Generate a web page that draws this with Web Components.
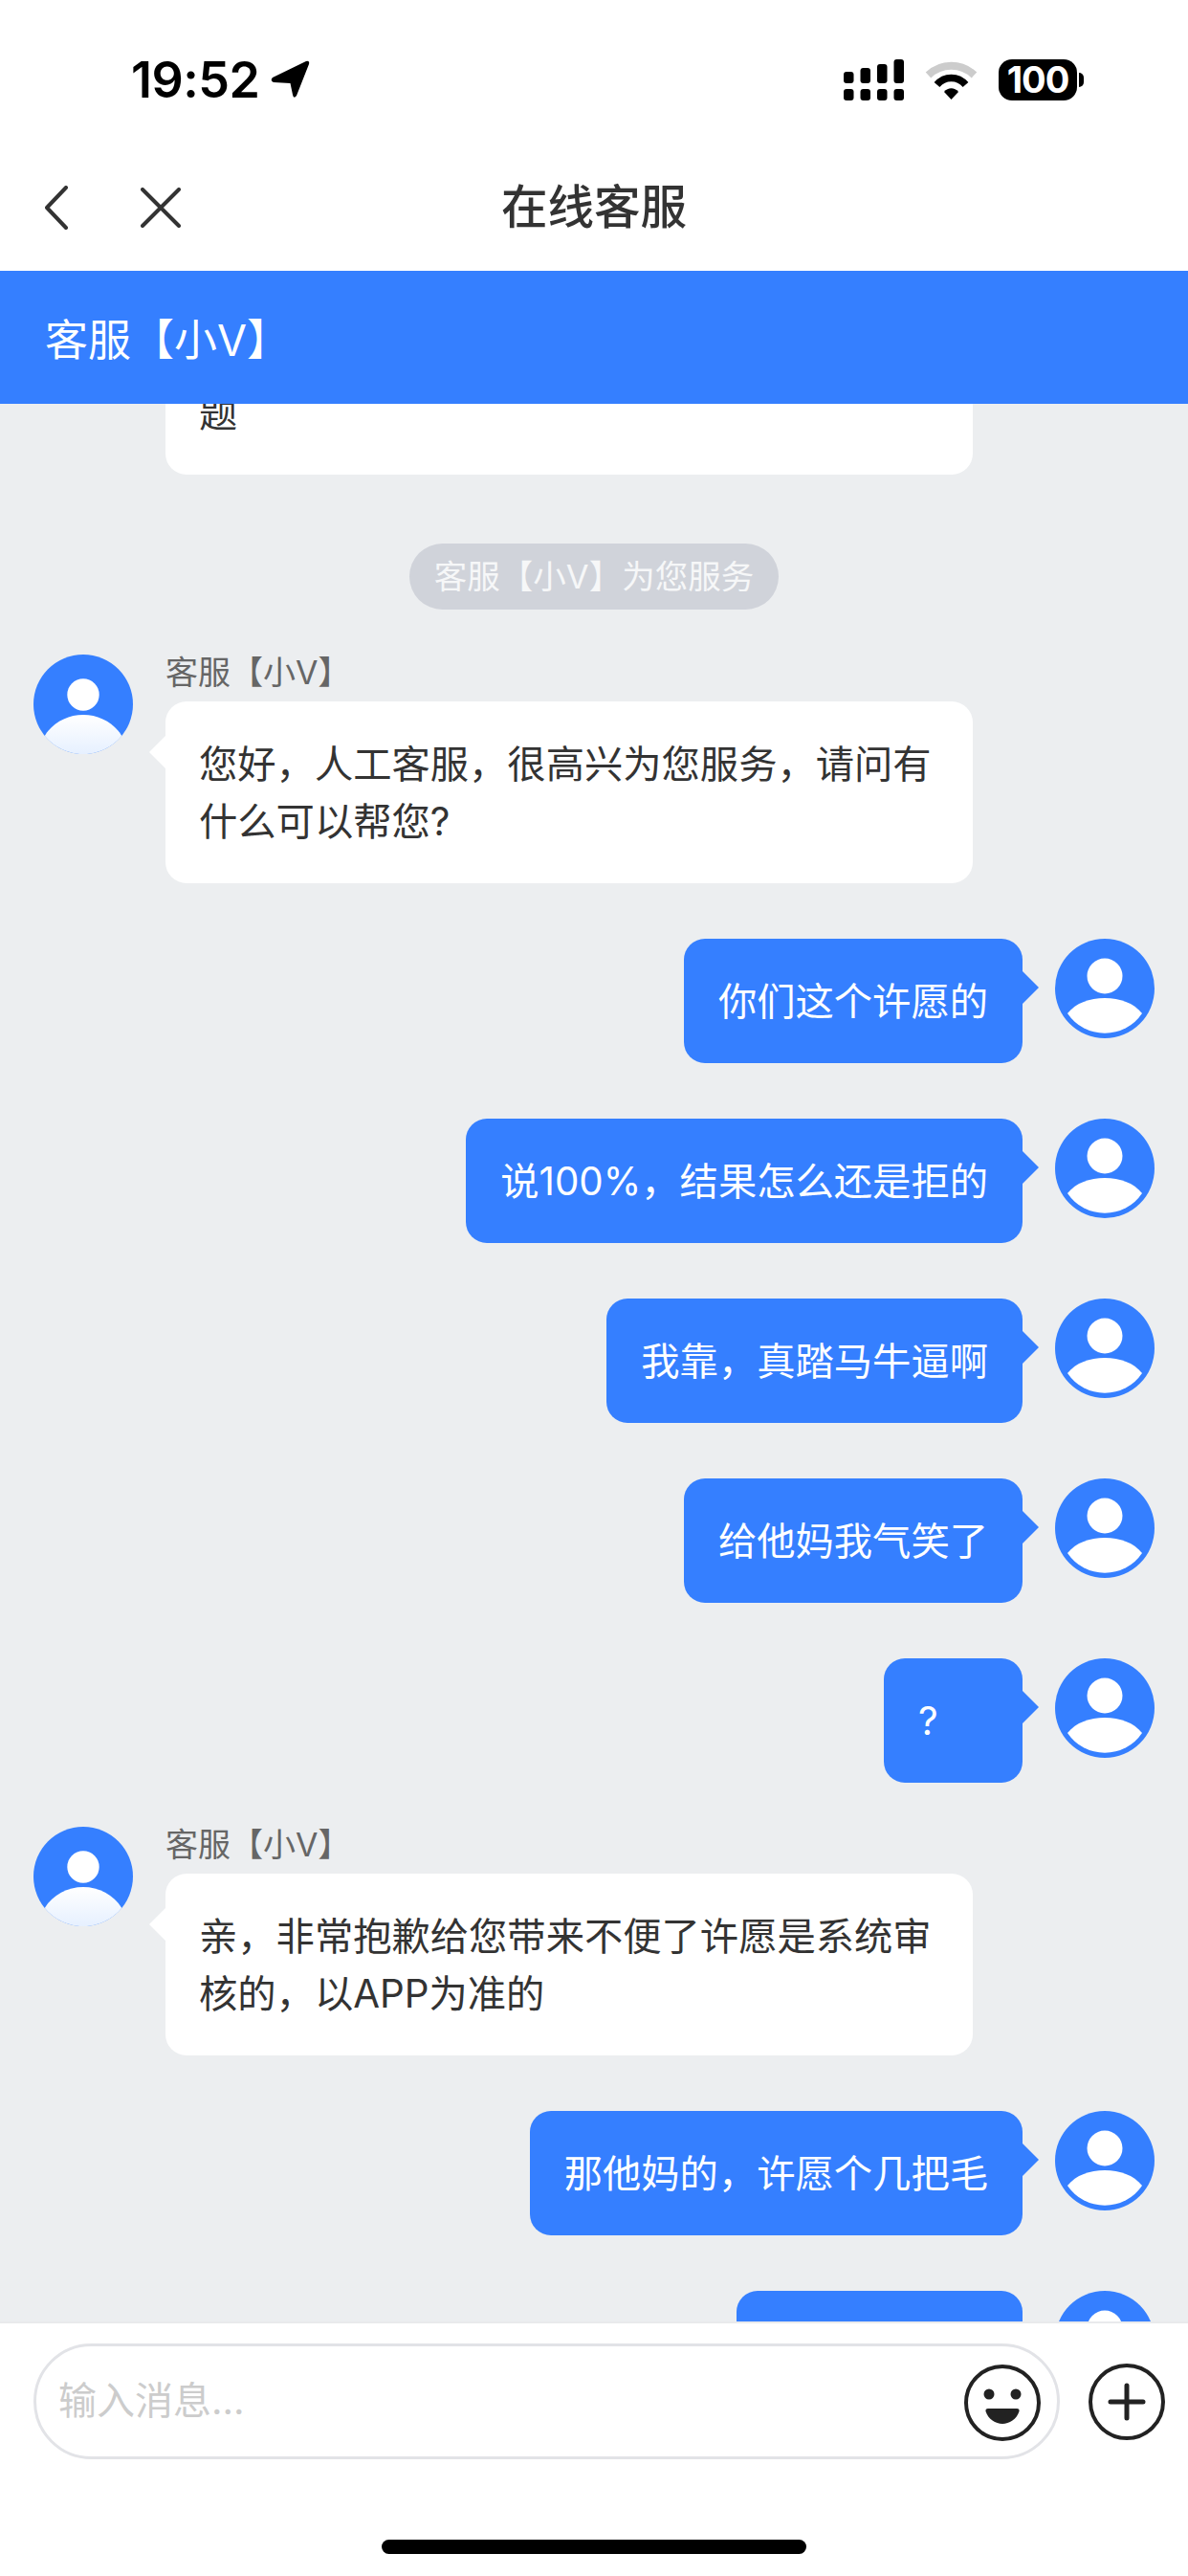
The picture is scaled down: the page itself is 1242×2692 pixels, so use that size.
<!DOCTYPE html>
<html lang="zh-CN">
<head>
<meta charset="utf-8">
<title>在线客服</title>
<style>
  html, body { margin: 0; padding: 0; }
  body {
    width: 1242px;
    height: 2692px;
    overflow: hidden;
    display: flex;
    flex-direction: column;
    background: #fff;
    color: #333;
    font-family: "Inter", "Noto Sans CJK SC", sans-serif;
  }
</style>
</head>
<body>
  <status-bar time="19:52"></status-bar>
  <nav-bar>在线客服</nav-bar>
  <agent-bar>客服【小V】</agent-bar>

  <chat-list>
    <chat-msg side="bot" clipped>题</chat-msg>
    <chat-notice>客服【小V】为您服务</chat-notice>
    <chat-msg side="bot" name="客服【小V】">您好，人工客服，很高兴为您服务，请问有什么可以帮您?</chat-msg>
    <chat-msg side="me">你们这个许愿的</chat-msg>
    <chat-msg side="me">说100%，结果怎么还是拒的</chat-msg>
    <chat-msg side="me">我靠，真踏马牛逼啊</chat-msg>
    <chat-msg side="me">给他妈我气笑了</chat-msg>
    <chat-msg side="me" style="--bubble-min:73px">?</chat-msg>
    <chat-msg side="bot" name="客服【小V】">亲，非常抱歉给您带来不便了许愿是系统审核的，以APP为准的</chat-msg>
    <chat-msg side="me">那他妈的，许愿个几把毛</chat-msg>
    <chat-msg side="me" style="--bubble-min:227px">&nbsp;</chat-msg>
  </chat-list>

  <chat-footer placeholder="输入消息..."></chat-footer>

<script>
;(function(){

  customElements.define('status-bar', class extends HTMLElement {
    constructor() {
      super();
      this.attachShadow({ mode: 'open' });
      this.shadowRoot.innerHTML = /*html*/`
        <style>
          :host {
            display: flex;
            flex: none;
            height: 167px;
            box-sizing: border-box;
            padding: 0 109px 0 137px;
            align-items: center;
            justify-content: space-between;
            color: #000;
          }
          .left, .right { display: flex; align-items: center; }
          .left { gap: 12px; }
          .right { gap: 22px; }
          .time {
            font: 600 52px/1 "Inter", sans-serif;
            letter-spacing: -0.5px;
          }
          svg { display: block; }
          .batt { display: flex; align-items: center; gap: 2px; }
          .batt b {
            width: 82px;
            height: 43px;
            border-radius: 14px;
            background: #000;
            color: #fff;
            font: 700 38px/43px "Inter", sans-serif;
            letter-spacing: -1px;
            text-align: center;
          }
          .batt i {
            width: 5px;
            height: 15px;
            background: #000;
            border-radius: 0 8px 8px 0;
          }
        </style>
        <div class="left">
          <span class="time"></span>
          <svg width="41" height="41" viewBox="0 0 41 41"><path d="M37 1Q41 0 40 4L27 37Q24 41 23 36L20.500 24L3 23Q-1 21 2 18Z"/></svg>
        </div>
        <div class="right">
          <svg width="63" height="43" viewBox="0 0 63 43">
            <rect x="0" y="31" width="10.500" height="12" rx="3"/>
            <rect x="17.500" y="31" width="10.500" height="12" rx="3"/>
            <rect x="35" y="31" width="10.500" height="12" rx="3"/>
            <rect x="52.500" y="31" width="10.500" height="12" rx="3"/>
            <rect x="0" y="13" width="10.500" height="12" rx="3"/>
            <rect x="17.500" y="9" width="10.500" height="16" rx="3"/>
            <rect x="35" y="5" width="10.500" height="20" rx="3"/>
            <rect x="52.500" y="0" width="10.500" height="25" rx="3"/>
          </svg>
          <svg width="55" height="40" viewBox="0 0 55 40">
            <path d="M3.500 14.500C17 1.500 38 1.500 51.500 14.500" fill="none" stroke="#ccc" stroke-width="8"/>
            <path d="M12.500 24.500C20.500 15 34.500 15 42.500 24.500" fill="none" stroke="#000" stroke-width="7.500"/>
            <path d="M20 32C24 27 31 27 35 32L27.500 40Z"/>
          </svg>
          <div class="batt"><b>100</b><i></i></div>
        </div>
      `;
      this.shadowRoot.querySelector('.time').textContent = this.getAttribute('time');
    }
  });

  customElements.define('nav-bar', class extends HTMLElement {
    constructor() {
      super();
      this.attachShadow({ mode: 'open' });
      this.shadowRoot.innerHTML = /*html*/`
        <style>
          :host {
            display: grid;
            flex: none;
            grid-template-columns: 1fr auto 1fr;
            align-items: center;
            height: 116px;
            box-sizing: border-box;
            padding-bottom: 16px;
            background: #fff;
          }
          .btns { display: flex; align-items: center; gap: 76px; padding-left: 47px; }
          .title { font-size: 48.500px; font-weight: 500; line-height: 60px; color: #333; }
          svg { display: block; }
        </style>
        <div class="btns">
          <svg width="24" height="46" viewBox="0 0 24 46" fill="none" stroke="#333" stroke-width="4" stroke-linecap="round" stroke-linejoin="round"><path d="M22 2L2 23L22 44"/></svg>
          <svg width="42" height="42" viewBox="0 0 42 42" fill="none" stroke="#333" stroke-width="4" stroke-linecap="round"><path d="M2 2L40 40M40 2L2 40"/></svg>
        </div>
        <div class="title"><slot></slot></div>
        <div></div>
      `;
    }
  });

  customElements.define('agent-bar', class extends HTMLElement {
    constructor() {
      super();
      this.attachShadow({ mode: 'open' });
      this.shadowRoot.innerHTML = /*html*/`
        <style>
          :host {
            display: flex;
            flex: none;
            align-items: center;
            height: 139px;
            padding-left: 47px;
            background: #357fff;
            color: #fff;
            font-size: 45px;
          }
        </style>
        <slot></slot>
      `;
    }
  });

  customElements.define('chat-list', class extends HTMLElement {
    constructor() {
      super();
      this.attachShadow({ mode: 'open' });
      this.shadowRoot.innerHTML = /*html*/`
        <style>
          :host {
            display: flex;
            flex: 1;
            min-height: 0;
            flex-direction: column;
            gap: 58px;
            overflow: hidden;
            background: #eceef0;
          }
        </style>
        <slot></slot>
      `;
    }
  });

  customElements.define('chat-notice', class extends HTMLElement {
    constructor() {
      super();
      this.attachShadow({ mode: 'open' });
      this.shadowRoot.innerHTML = /*html*/`
        <style>
          :host { display: flex; flex: none; justify-content: center; margin-bottom: 1px; }
          span {
            height: 69px;
            padding: 0 26px;
            border-radius: 35px;
            background: #d0d3da;
            color: #f6f7f8;
            font-size: 34.500px;
            line-height: 69px;
          }
        </style>
        <span><slot></slot></span>
      `;
    }
  });

  const avatars = {
    bot: `
      <defs><linearGradient id="g" x1="0" y1="0" x2="0" y2="1">
        <stop offset="0" stop-color="#fff"/><stop offset="1" stop-color="#e6f0ff"/>
      </linearGradient></defs>
      <circle cx="52" cy="52" r="52" fill="#357fff"/>
      <circle cx="52" cy="42" r="16.700" fill="#fff"/>
      <path d="M11.700 85C20 71 36 63 52 63S84 71 92.300 85A52 52 0 0 1 11.700 85Z" fill="url(#g)"/>`,
    me: `
      <circle cx="52" cy="52" r="52" fill="#357fff"/>
      <circle cx="52" cy="39" r="18.500" fill="#fff"/>
      <path d="M13 78C22 67 36 62 52 62S82 67 91 78A47 47 0 0 1 13 78Z" fill="#fff"/>`
  };

  customElements.define('chat-msg', class extends HTMLElement {
    constructor() {
      super();
      const side = this.getAttribute('side');
      const name = this.getAttribute('name');
      this.attachShadow({ mode: 'open' });
      this.shadowRoot.innerHTML = /*html*/`
        <style>
          :host {
            display: flex;
            flex: none;
            gap: 34px;
            padding: 0 35px;
            font-size: 40.300px;
            line-height: 60px;
          }
          :host([side="me"]) { flex-direction: row-reverse; }
          :host([name]) { margin-top: -12px; }
          :host([clipped]) { margin-top: -20px; margin-bottom: 14px; padding-left: 173px; }
          svg { display: block; flex: none; }
          .name { font-size: 34px; line-height: 38px; margin-bottom: 11px; color: #666; }
          .bubble {
            position: relative;
            box-sizing: border-box;
            padding: 36px 36px 34px;
            border-radius: 22px;
          }
          :host([side="bot"]) .bubble { width: 844px; padding-left: 35px; background: #fff; color: #333; }
          :host([side="me"]) .bubble { background: #357fff; color: #fff; }
          :host([clipped]) .bubble { padding-top: 0; }
          .text { min-width: var(--bubble-min, 0); }
          .bubble::before {
            content: "";
            position: absolute;
            top: 36px;
            border-style: solid;
            border-width: 17px;
          }
          :host([side="bot"]) .bubble::before {
            left: -17px;
            border-width: 17px 17px 17px 0;
            border-color: transparent #fff transparent transparent;
          }
          :host([side="me"]) .bubble::before {
            right: -17px;
            top: 34px;
            border-width: 17px 0 17px 17px;
            border-color: transparent transparent transparent #357fff;
          }
          :host([clipped]) .bubble::before { display: none; }
        </style>
        ${this.hasAttribute('clipped') ? '' : `<svg width="104" height="104" viewBox="0 0 104 104">${avatars[side]}</svg>`}
        <div>
          ${name ? `<div class="name">${name}</div>` : ''}
          <div class="bubble"><div class="text"><slot></slot></div></div>
        </div>
      `;
    }
  });

  customElements.define('chat-footer', class extends HTMLElement {
    constructor() {
      super();
      this.attachShadow({ mode: 'open' });
      this.shadowRoot.innerHTML = /*html*/`
        <style>
          :host {
            display: flex;
            flex: none;
            flex-direction: column;
            height: 266px;
            box-sizing: border-box;
            border-top: 2px solid #e9eaec;
            padding-top: 21px;
            background: #fff;
          }
          .row { display: flex; align-items: center; gap: 30px; padding-left: 35px; }
          .input {
            display: flex;
            align-items: center;
            justify-content: space-between;
            box-sizing: border-box;
            width: 1073px;
            height: 121px;
            padding: 0 17px 0 23px;
            border: 3px solid #e2e3e7;
            border-radius: 61px;
            color: #ccc;
            font-size: 40px;
          }
          .ph { margin-bottom: 7px; }
          .input svg { margin-top: 3px; }
          svg { display: block; flex: none; }
          .home {
            align-self: center;
            width: 444px;
            height: 15px;
            margin-top: 84px;
            border-radius: 8px;
            background: #000;
          }
        </style>
        <div class="row">
          <div class="input">
            <span class="ph"></span>
            <svg width="80" height="80" viewBox="0 0 80 80">
              <circle cx="40" cy="40" r="38" fill="none" stroke="#222" stroke-width="4"/>
              <circle cx="26" cy="31" r="5.500" fill="#222"/>
              <circle cx="54" cy="31" r="5.500" fill="#222"/>
              <path d="M25 46H55Q58 46 57.500 49C55 57 47 62 40 62S25 57 22.500 49Q22 46 25 46Z" fill="#222"/>
            </svg>
          </div>
          <svg width="80" height="80" viewBox="0 0 80 80" fill="none" stroke="#222" stroke-width="4">
            <circle cx="40" cy="40" r="38"/>
            <path d="M40 23V57M23 40H57" stroke-width="5" stroke-linecap="round"/>
          </svg>
        </div>
        <div class="home"></div>
      `;
      this.shadowRoot.querySelector('.ph').textContent = this.getAttribute('placeholder');
    }
  });

})();
</script>
</body>
</html>
